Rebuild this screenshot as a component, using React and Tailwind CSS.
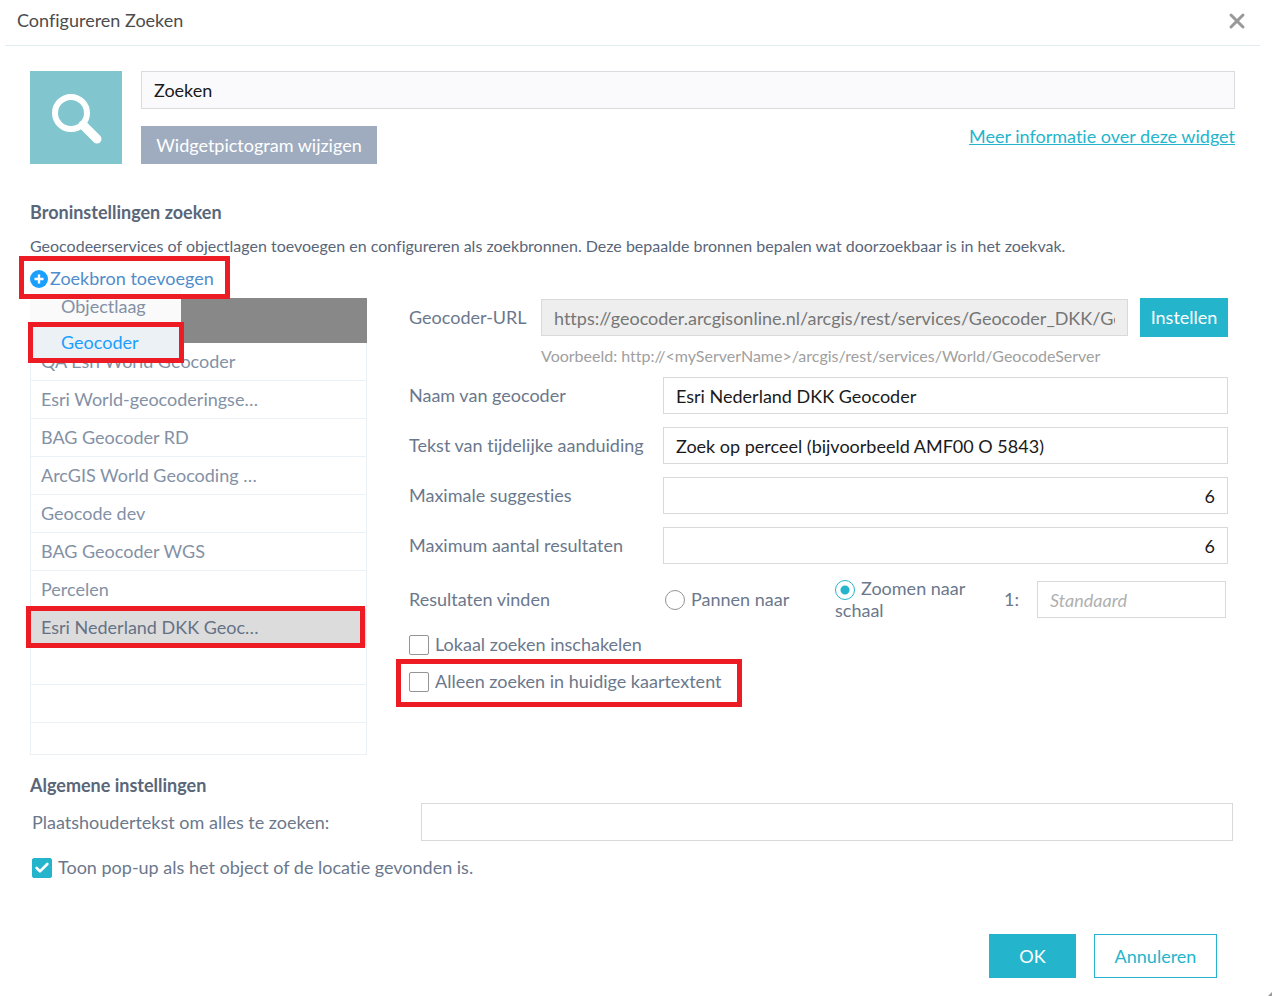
import React, { useState } from 'react';
import { Check, X } from 'lucide-react';

const SOURCES = [
  'QA Esri World Geocoder',
  'Esri World-geocoderingse…',
  'BAG Geocoder RD',
  'ArcGIS World Geocoding …',
  'Geocode dev',
  'BAG Geocoder WGS',
  'Percelen',
  'Esri Nederland DKK Geoc…',
];

const FIELDS = [
  { id: 'name', label: 'Naam van geocoder', value: 'Esri Nederland DKK Geocoder' },
  { id: 'placeholder', label: 'Tekst van tijdelijke aanduiding', value: 'Zoek op perceel (bijvoorbeeld AMF00 O 5843)' },
  { id: 'suggestions', label: 'Maximale suggesties', value: '6', numeric: true },
  { id: 'results', label: 'Maximum aantal resultaten', value: '6', numeric: true },
];

function Checkbox({ id, label, defaultChecked, children }) {
  return (
    <div className="relative flex items-center gap-1.5">
      <span className="relative block h-5 w-5 shrink-0">
        <input
          id={id}
          type="checkbox"
          defaultChecked={defaultChecked}
          className="peer block h-5 w-5 appearance-none rounded-xs border border-[#949494] bg-white checked:border-[#24b5cc] checked:bg-[#24b5cc]"
        />
        <Check className="pointer-events-none absolute top-0.5 left-0.5 hidden h-4 w-4 text-white peer-checked:block" strokeWidth={4} />
      </span>
      <label htmlFor={id}>{label}</label>
      {children}
    </div>
  );
}

function Radio({ id, checked, onChange }) {
  return (
    <input
      id={id}
      type="radio"
      name="zoom-mode"
      checked={checked}
      onChange={onChange}
      className="mr-1.5 inline-block h-5 w-5 shrink-0 appearance-none rounded-full border border-[#949494] bg-white align-middle checked:border-[#24b5cc] checked:bg-[radial-gradient(circle,#24b5cc_4px,transparent_5px)]"
    />
  );
}

// red marker around the steps of the instruction
function Marker({ className }) {
  return <span className={`pointer-events-none absolute z-20 border-5 border-[#ed1c24] ${className}`} />;
}

export default function App() {
  const [selected, setSelected] = useState(7);
  const [mode, setMode] = useState('scale');

  return (
    <div className="relative min-h-screen bg-white font-['Lato',sans-serif] text-lg leading-[21px] text-[#6b788c] [font-variant-ligatures:none]">
      <header className="mr-3 ml-[5px] flex h-[46px] items-center justify-between border-b border-[#e1ebf2] pr-[11px] pb-1 pl-3">
        <h1 className="text-[#4c4c4c]">Configureren Zoeken</h1>
        <button type="button" aria-label="Sluiten" className="text-[#999999]">
          <X className="h-6 w-6" strokeWidth={3} />
        </button>
      </header>

      <main className="pt-[25px] pr-[37px] pl-[30px]">
        <section className="flex gap-[19px]">
          <div className="flex h-[93px] w-[92px] shrink-0 items-center justify-center bg-[#81c6cf]">
            <svg viewBox="0 0 52 52" className="h-[52px] w-[52px]" fill="none" stroke="white">
              <circle cx="21" cy="21" r="16" strokeWidth="6" />
              <path d="M33 33 L47 47" strokeWidth="9" strokeLinecap="round" />
            </svg>
          </div>
          <div className="flex-1">
            <input aria-label="Widgetnaam" defaultValue="Zoeken" className="block h-[38px] w-full border border-[#d9dbdf] bg-[#fafafc] px-3 text-[#1a1a1a]" />
            <div className="mt-[17px] flex items-start justify-between">
              <button type="button" className="h-[38px] w-[236px] bg-[#9facc0] text-white">Widgetpictogram wijzigen</button>
              <a href="#info" className="text-[#24b5cc] underline">Meer informatie over deze widget</a>
            </div>
          </div>
        </section>

        <h2 className="mt-[38px] font-bold text-[#596679]">Broninstellingen zoeken</h2>
        <p className="mt-3 text-base leading-[21px] text-[#596679]">
          Geocodeerservices of objectlagen toevoegen en configureren als zoekbronnen. Deze bepaalde bronnen bepalen wat doorzoekbaar is in het zoekvak.
        </p>

        <div className="relative mt-3 w-[189px]">
          <button type="button" className="flex items-center gap-0.5 whitespace-nowrap text-[#508dcb]">
            <svg viewBox="0 0 18 18" className="h-[18px] w-[18px]">
              <circle cx="9" cy="9" r="9" fill="#1a9fff" />
              <path d="M9 4.5 V13.5 M4.5 9 H13.5" stroke="white" strokeWidth="2.4" />
            </svg>
            Zoekbron toevoegen
          </button>
          <Marker className="-top-3 -left-[11px] h-[43px] w-[211px]" />
          <ul className="absolute top-5 left-0 z-10 w-[151px] bg-[#fafafa] text-[#8391a5]">
            <li><button type="button" className="block h-9 w-full pl-[31px] text-left">Objectlaag</button></li>
            <li className="relative">
              <button type="button" className="block h-9 w-full bg-[#ebf1f4] pl-[31px] text-left text-[#1a9fff]">Geocoder</button>
              <Marker className="-top-0.5 -left-0.5 h-[41px] w-[156px]" />
            </li>
          </ul>
        </div>

        <div className="mt-[9px] flex gap-[42px]">
          <div className="h-[457px] w-[337px] shrink-0">
            <div className="h-[45px] bg-[#888888]" />
            <ul className="h-[412px] border-x border-b border-[#ebf0f5] text-[#8391a5]">
              {SOURCES.map((name, i) => (
                <li key={name} className="relative h-[38px] border-b border-[#ebf2f7]">
                  <button
                    type="button"
                    onClick={() => setSelected(i)}
                    className={`h-full w-full truncate pl-2.5 text-left ${i === selected ? 'bg-[#dcdcdc] text-[#657286]' : ''}`}
                  >
                    {name}
                  </button>
                  {i === 7 && <Marker className="-top-[3px] -left-[5px] h-[42px] w-[339px]" />}
                </li>
              ))}
              <li className="h-[38px] border-b border-[#ebf2f7]" />
              <li className="h-[38px] border-b border-[#ebf2f7]" />
            </ul>
          </div>

          <div className="min-w-0 flex-1 pr-[7px]">
            <div className="flex items-center">
              <label htmlFor="url" className="w-[132px] shrink-0">Geocoder-URL</label>
              <input
                id="url"
                disabled
                defaultValue="https://geocoder.arcgisonline.nl/arcgis/rest/services/Geocoder_DKK/GeocodeServer"
                className="h-[37px] min-w-0 flex-1 border border-[#d9d9d9] bg-[#eeeeee] px-3 text-[#767676]"
              />
              <button type="button" className="ml-3 h-[39px] w-[88px] bg-[#24b5cc] text-white">Instellen</button>
            </div>
            <p className="mt-2 ml-[132px] text-base leading-[21px] text-[#a0a0a0]">Voorbeeld: http://&lt;myServerName&gt;/arcgis/rest/services/World/GeocodeServer</p>

            <div className="mt-[11px] flex flex-col gap-[13px]">
              {FIELDS.map((f) => (
                <div key={f.id} className="flex items-center">
                  <label htmlFor={f.id} className="w-[254px] shrink-0 whitespace-nowrap">{f.label}</label>
                  <input
                    id={f.id}
                    defaultValue={f.value}
                    className={`h-[37px] min-w-0 flex-1 border border-[#d9d9d9] px-3 text-[#1a1a1a] ${f.numeric ? 'text-right' : ''}`}
                  />
                </div>
              ))}
            </div>

            <div className="mt-[14px] flex items-center pr-0.5">
              <span className="w-[256px] shrink-0">Resultaten vinden</span>
              <div className="flex w-[170px] shrink-0 items-center">
                <Radio id="pan" checked={mode === 'pan'} onChange={() => setMode('pan')} />
                <label htmlFor="pan">Pannen naar</label>
              </div>
              <div className="w-[140px] shrink-0">
                <Radio id="scale" checked={mode === 'scale'} onChange={() => setMode('scale')} />
                <label htmlFor="scale">Zoomen naar schaal</label>
              </div>
              <label htmlFor="scale-value" className="ml-[29px] w-[33px] shrink-0">1:</label>
              <input id="scale-value" placeholder="Standaard" className="h-[37px] min-w-0 flex-1 border border-[#d9d9d9] px-3 placeholder:text-[#b0b0b0] placeholder:italic" />
            </div>

            <div className="mt-[13px] flex flex-col gap-4">
              <Checkbox id="local" label="Lokaal zoeken inschakelen" />
              <Checkbox id="extent" label="Alleen zoeken in huidige kaartextent">
                <Marker className="-top-3 -left-[13px] h-12 w-[346px]" />
              </Checkbox>
            </div>
          </div>
        </div>

        <h2 className="mt-5 font-bold text-[#596679]">Algemene instellingen</h2>
        <div className="mt-[7px] flex items-center pr-0.5">
          <label htmlFor="all-placeholder" className="w-[391px] shrink-0 pl-0.5">Plaatshoudertekst om alles te zoeken:</label>
          <input id="all-placeholder" className="h-[38px] min-w-0 flex-1 border border-[#d9d9d9] px-3" />
        </div>
        <div className="mt-4 pl-0.5">
          <Checkbox id="popup" label="Toon pop-up als het object of de locatie gevonden is." defaultChecked />
        </div>
      </main>

      <footer className="mt-14 flex justify-end gap-[18px] pr-[55px] pb-[18px]">
        <button type="button" className="h-11 w-[87px] bg-[#24b5cc] text-white">OK</button>
        <button type="button" className="h-11 w-[123px] border border-[#24b5cc] text-[#24b5cc]">Annuleren</button>
      </footer>

      <svg viewBox="0 0 4 4" className="absolute right-0 bottom-0 h-1 w-1">
        <path d="M4 0 V4 H0 Z" fill="#999999" />
      </svg>
    </div>
  );
}
